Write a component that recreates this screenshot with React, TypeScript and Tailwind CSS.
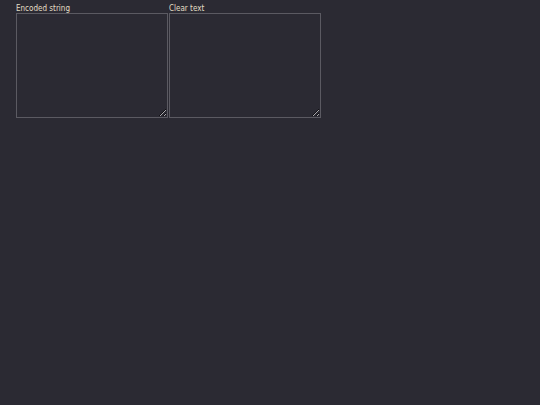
export default function App() {
  return (
    <main className="min-h-screen bg-[#2b2a33] px-4 pt-[5px] font-['DejaVu_Sans_Condensed','DejaVu_Sans',sans-serif] text-[8px] text-[#e3dfc6]">
      <div className="flex gap-[1px]">
        <label className="flex flex-col">
          <span className="leading-[8px] h-[8px]">Encoded string</span>
          <textarea className="w-[152px] h-[105px] border border-[#5b5a62] bg-[#2b2a33] text-[#e3dfc6] outline-none" />
        </label>
        <label className="flex flex-col">
          <span className="leading-[8px] h-[8px]">Clear text</span>
          <textarea className="w-[152px] h-[105px] border border-[#5b5a62] bg-[#2b2a33] text-[#e3dfc6] outline-none" />
        </label>
      </div>
    </main>
  );
}
